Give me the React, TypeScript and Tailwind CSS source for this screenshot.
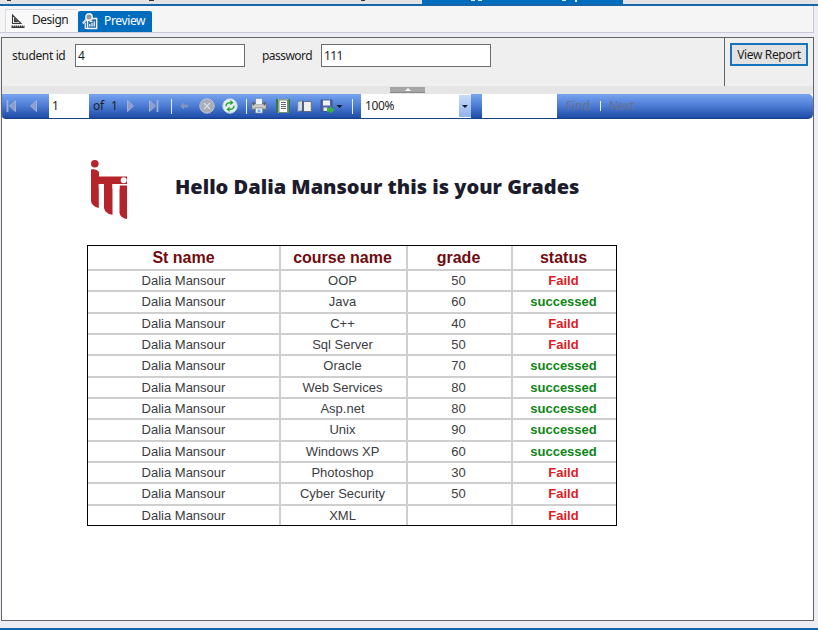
import React from "react";

const rows: [string, string, boolean][] = [
  ["OOP", "50", false],
  ["Java", "60", true],
  ["C++", "40", false],
  ["Sql Server", "50", false],
  ["Oracle", "70", true],
  ["Web Services", "80", true],
  ["Asp.net", "80", true],
  ["Unix", "90", true],
  ["Windows XP", "60", true],
  ["Photoshop", "30", false],
  ["Cyber Security", "50", false],
  ["XML", "", false],
];

const columns = "grid grid-cols-[191px_125px_103px_103px] gap-x-[2px] [&>div]:bg-white [&>div:nth-child(n+2)]:pr-[2px]";

function DocumentStrip() {
  return (
    <div className="flex h-[6px] shrink-0 border-b-2 border-[#1665a8] bg-[#e3e3e6]">
      <div className="ml-[7px] h-px w-[4px] bg-[#333]" />
      <div className="ml-[138px] h-px w-[5px] bg-[#333]" />
      <div className="ml-[207px] h-px w-[4px] bg-[#333]" />
      <div className="ml-[57px] flex h-[4px] w-[201px] bg-[#006cbe]">
        <div className="ml-[49px] h-px w-[4px] bg-[#d8ebf9]" />
        <div className="ml-[3px] h-px w-[4px] bg-[#d8ebf9]" />
        <div className="ml-[80px] h-px w-[4px] bg-[#d8ebf9]" />
        <div className="ml-[9px] h-[2px] w-[2px] bg-[#d8ebf9]" />
      </div>
    </div>
  );
}

function DesignIcon() {
  return (
    <svg width="14" height="15" viewBox="0 0 14 15">
      <path d="M1.5 1v8.5h8.5z M3.6 5v2.6h2.7z" fill="none" stroke="#3b3b3b" strokeWidth="1.1" />
      <path d="M.5 11.5h13v2.5H.5z" fill="#3b3b3b" />
      <path d="M2.5 11v1.5M4.5 11v1.5M6.5 11v1.5M8.5 11v1.5M10.5 11v1.5M12.5 11v1.5" stroke="#eee" strokeWidth=".8" />
    </svg>
  );
}

function PreviewIcon() {
  return (
    <svg width="16" height="17" viewBox="0 0 16 17">
      <path d="M5.5 5.5h9.2v10H5.5z" fill="#2b6da5" stroke="#f5f5f5" strokeWidth="1.4" />
      <path d="M7.8 13.5v-2.5M10 13.5v-3.5M12.2 13.5V8.5M7.5 8.3h3" stroke="#fff" strokeWidth="1.2" />
      <circle cx="7" cy="4" r="3.2" fill="#8d9aa3" stroke="#f5f5f5" strokeWidth="1.4" />
      <path d="M4.5 6.5L.8 10.5" stroke="#d9dde0" strokeWidth="2.2" />
      <path d="M3.3 10v5.5h2" fill="none" stroke="#f5f5f5" strokeWidth="1.2" />
    </svg>
  );
}

function PageArrow({ dir, bar }: { dir: "left" | "right"; bar?: boolean }) {
  return (
    <svg width="12" height="14" viewBox="0 0 12 14">
      <g transform={dir === "right" ? "translate(12 0) scale(-1 1)" : undefined} stroke="#9fb0d6" fill="#8a9dcb">
        {bar && <path d="M1.5 1v12" strokeWidth="1.8" />}
        <path d="M9.5 1.5v11L3.5 7z" strokeWidth="1" />
      </g>
    </svg>
  );
}

function Separator() {
  return <div className="h-[15px] w-px bg-[#e6efff]" />;
}

function BackIcon() {
  return (
    <svg width="10" height="10" viewBox="0 0 10 10">
      <path d="M1 5l4-3.5v2h4v3H5v2z" fill="#7f93c2" />
    </svg>
  );
}

function StopIcon() {
  return (
    <svg width="16" height="16" viewBox="0 0 16 16">
      <circle cx="8" cy="8" r="7.2" fill="#a9adb8" stroke="#bcc5d9" />
      <path d="M5 5l6 6M11 5l-6 6" stroke="#d4d7de" strokeWidth="1.6" />
    </svg>
  );
}

function RefreshIcon() {
  return (
    <svg width="16" height="16" viewBox="0 0 16 16">
      <circle cx="8" cy="8" r="7.2" fill="#e1f0ed" stroke="#bfdbec" />
      <path d="M4 8.2C4.2 5.2 6 4.5 8.5 4.7M12 7.8c-.2 3-2 3.7-4.5 3.5" fill="none" stroke="#2b9c3c" strokeWidth="1.5" />
      <path d="M8.3 2l3.3 2.8-3.3 2.4zM7.7 14l-3.3-2.8 3.3-2.4z" fill="#2b9c3c" />
    </svg>
  );
}

function PrintIcon() {
  return (
    <svg width="16" height="16" viewBox="0 0 16 16">
      <path d="M5 .8h6v6H5z" fill="#f5f7fa" stroke="#8f98a6" strokeWidth=".7" />
      <path d="M.6 5.5h14.8v6H.6z" fill="#b6b8b9" stroke="#666d76" strokeWidth=".9" />
      <path d="M2.5 4v4M13.5 4v4" stroke="#565c64" strokeWidth="1.6" />
      <path d="M5 1h6v5H5z" fill="#f1f5fa" />
      <path d="M1.3 8h13.4" stroke="#e5e3dc" />
      <path d="M4.5 10h7v5h-7z" fill="#eef5fd" stroke="#7d8590" strokeWidth=".7" />
      <path d="M6.5 11.5h3v2.5h-3z" fill="#68aef0" />
    </svg>
  );
}

function LayoutIcon() {
  return (
    <svg width="16" height="16" viewBox="0 0 16 16">
      <path d="M1 1h14v14H1z" fill="#a5c7a8" />
      <path d="M1 1h2v14H1zM13.3 1H15v14h-1.7z" fill="#31784a" />
      <path d="M4 2h8.5v12.5H4z" fill="#fffff8" stroke="#587469" strokeWidth=".8" />
      <path d="M6 4.5h5M6 6.5h5M6 8.5h5M6 10.5h5" stroke="#4d5868" strokeWidth=".9" />
    </svg>
  );
}

function SetupIcon() {
  return (
    <svg width="15" height="13" viewBox="0 0 15 13">
      <path d="M.7 1.5l4.8-.8v10l-4.8.8z" fill="#d4dae4" stroke="#69758b" strokeWidth=".8" />
      <path d="M6.3 1.5h8v10h-8z" fill="#f1f1ec" stroke="#5d6677" strokeWidth=".9" />
      <path d="M6 1V12" stroke="#364e78" strokeWidth="1.2" />
    </svg>
  );
}

function ExportIcon() {
  return (
    <svg width="23" height="15" viewBox="0 0 23 15">
      <path d="M1 1h11v11H1z" fill="#5265a5" stroke="#38467d" strokeWidth=".8" />
      <path d="M3 1.4h7v5.1H3z" fill="#eef1f6" />
      <path d="M3.5 8.5h4V12h-4z" fill="#e0e5ee" />
      <path d="M7 9h3V7l4.3 4-4.3 3.7v-2H7z" fill="#38b53c" />
      <path d="M16.5 6h6l-3 3z" fill="#101820" />
    </svg>
  );
}

function Logo() {
  return (
    <svg width="38" height="60" viewBox="0 0 38 60">
      <g fill="#b5232b">
        <circle cx="4.8" cy="3.8" r="3.8" />
        <path d="M1 9.5C4 8.6 7 9.4 9 12v4.5h28V24H1z" />
        <path d="M1 19h7.8v29C4.5 47 1.5 44.5 1 41z" />
        <path d="M14 20h8.5v34.7c-5-.6-8-3.4-8.5-7z" />
        <path d="M29.5 25.5h7.5V59c-4.5-.6-7.1-3-7.5-6.5z" />
      </g>
      <path d="M8.8 24h5.2v4H8.8zM22.5 24h7v5h-7z" fill="#fff" />
      <circle cx="33.7" cy="20.2" r="3" fill="#fff" />
    </svg>
  );
}

export default function App() {
  return (
    <div className="flex h-[630px] w-[818px] flex-col overflow-hidden bg-[#ededf3] font-['Noto_Sans',sans-serif] text-[12px] text-[#1e1e1e]">
      <DocumentStrip />

      <div className="flex h-[27px] w-[814px] shrink-0 items-end border-b border-r border-[#c6c9d9] bg-[#f5f5f6] pl-[5px]">
        <div className="flex h-[23px] w-[72px] items-center border-l border-t border-[#d8dae5] bg-[#f9f9fa] pl-[5px]">
          <DesignIcon />
          <span className="ml-[7px] -mt-[3px] tracking-[-0.04em]">Design</span>
        </div>
        <div className="ml-px flex h-[21px] w-[74px] items-center rounded-t-[2px] bg-[#006cbe] pl-[4px] text-white">
          <PreviewIcon />
          <span className="ml-[6px] -mt-[2px] tracking-[-0.03em]">Preview</span>
        </div>
      </div>

      <div className="ml-px mt-[4px] flex h-[584px] w-[813px] shrink-0 flex-col border border-[#62646a] bg-white">
        <div className="flex h-[48px] shrink-0 bg-[#efefef]">
          <div className="flex w-[723px] items-start border-r border-[#62646a] pt-[6px]">
            <span className="ml-[10px] mt-[3px] w-[63px] tracking-[-0.03em]">student id</span>
            <div className="h-[23px] w-[170px] border border-[#6d6d6d] bg-white pl-[2px] leading-[21px]">4</div>
            <span className="ml-[17px] mt-[3px] w-[59px] tracking-[-0.045em]">password</span>
            <div className="h-[23px] w-[170px] border border-[#6d6d6d] bg-white pl-[2px] leading-[21px] tracking-[-0.05em]">111</div>
          </div>
          <div className="ml-[5px] mt-[5px] flex h-[23px] w-[78px] items-center justify-center whitespace-nowrap border-2 border-[#1473ba] bg-[#e2e2e2] tracking-[-0.03em]">
            View Report
          </div>
        </div>

        <div className="flex h-[8px] shrink-0 justify-center bg-[#e5e5e5]">
          <div className="mt-px flex h-[6px] w-[35px] items-center justify-center border-b border-[#888] bg-[#a6a6a6]">
            <svg width="6" height="3" viewBox="0 0 6 3"><path d="M0 3l3-3 3 3z" fill="#fff" /></svg>
          </div>
        </div>

        <div className="flex h-[25px] shrink-0 items-center rounded-r-[5px] rounded-bl-[4px] border-b border-[#173f88] bg-linear-to-b from-[#78a4ee] via-[#4c7bd4] to-[#1c4aa5] text-[12px]">
          <div className="ml-[4px] flex"><PageArrow dir="left" bar /></div>
          <div className="ml-[9px] flex"><PageArrow dir="left" /></div>
          <div className="ml-[10px] flex h-full w-[40px] items-center bg-white pl-[3px] text-[12px]">1</div>
          <span className="ml-[4px] w-[14px] tracking-[-0.03em]">of</span>
          <span className="ml-[4px] w-[8px]">1</span>
          <div className="ml-[6px] flex"><PageArrow dir="right" /></div>
          <div className="ml-[10px] flex"><PageArrow dir="right" bar /></div>
          <div className="ml-[12px]"><Separator /></div>
          <div className="ml-[7px]"><BackIcon /></div>
          <div className="ml-[10px]"><StopIcon /></div>
          <div className="ml-[7px]"><RefreshIcon /></div>
          <div className="ml-[8px]"><Separator /></div>
          <div className="ml-[4px]"><PrintIcon /></div>
          <div className="ml-[8px]"><LayoutIcon /></div>
          <div className="ml-[6px]"><SetupIcon /></div>
          <div className="ml-[8px]"><ExportIcon /></div>
          <div className="ml-[9px]"><Separator /></div>
          <div className="ml-[8px] flex h-full w-[110px] items-center bg-white pl-[4px]">
            <span className="flex-1 text-[12px] tracking-[-0.03em]">100%</span>
            <div className="flex h-[22px] w-[12px] items-center justify-center bg-linear-to-b from-[#c9dbf8] to-[#91b3ea]">
              <svg width="6" height="3" viewBox="0 0 6 3"><path d="M0 0h6L3 3z" fill="#111c32" /></svg>
            </div>
          </div>
          <div className="ml-[11px] h-full w-[75px] bg-white" />
          <span className="ml-[9px] w-[25px] text-[12px] text-[#68728f]">Find</span>
          <div className="ml-[9px] h-[10px] w-px bg-[#e6efff]" />
          <span className="ml-[8px] text-[12px] tracking-[-0.03em] text-[#68728f]">Next</span>
        </div>

        <div className="flex flex-1 flex-col pl-[85px] pt-[41px]">
          <div className="ml-[3px] flex h-[60px]">
            <Logo />
            <h1 className="ml-[47px] mt-[13px] whitespace-nowrap font-['Open_Sans',sans-serif] text-[20px] font-extrabold leading-[28px] tracking-normal text-[#1c1c2c]">
              Hello Dalia Mansour this is your Grades
            </h1>
          </div>
          <div className="mt-[25px] w-[530px] border border-black bg-[#cfcfcf] font-['Liberation_Sans',Arial,sans-serif] text-[13px] text-[#3c3c42]">
            <div className={`${columns} h-[23px] text-center text-[16px] font-bold leading-[23px] text-[#720b10]`}>
              <div>St name</div>
              <div>course name</div>
              <div>grade</div>
              <div>status</div>
            </div>
            {rows.map(([course, grade, passed]) => (
              <div key={course} className={`${columns} h-[21.33px] pt-[2px] text-center leading-[19px]`}>
                <div>Dalia Mansour</div>
                <div>{course}</div>
                <div>{grade}</div>
                <div className={passed ? "font-bold text-[#0e8516]" : "font-bold text-[#e01b24]"}>
                  {passed ? "successed" : "Faild"}
                </div>
              </div>
            ))}
          </div>
        </div>
      </div>

      <div className="mt-auto h-[2px] shrink-0 bg-[#1665a8]" />
    </div>
  );
}
